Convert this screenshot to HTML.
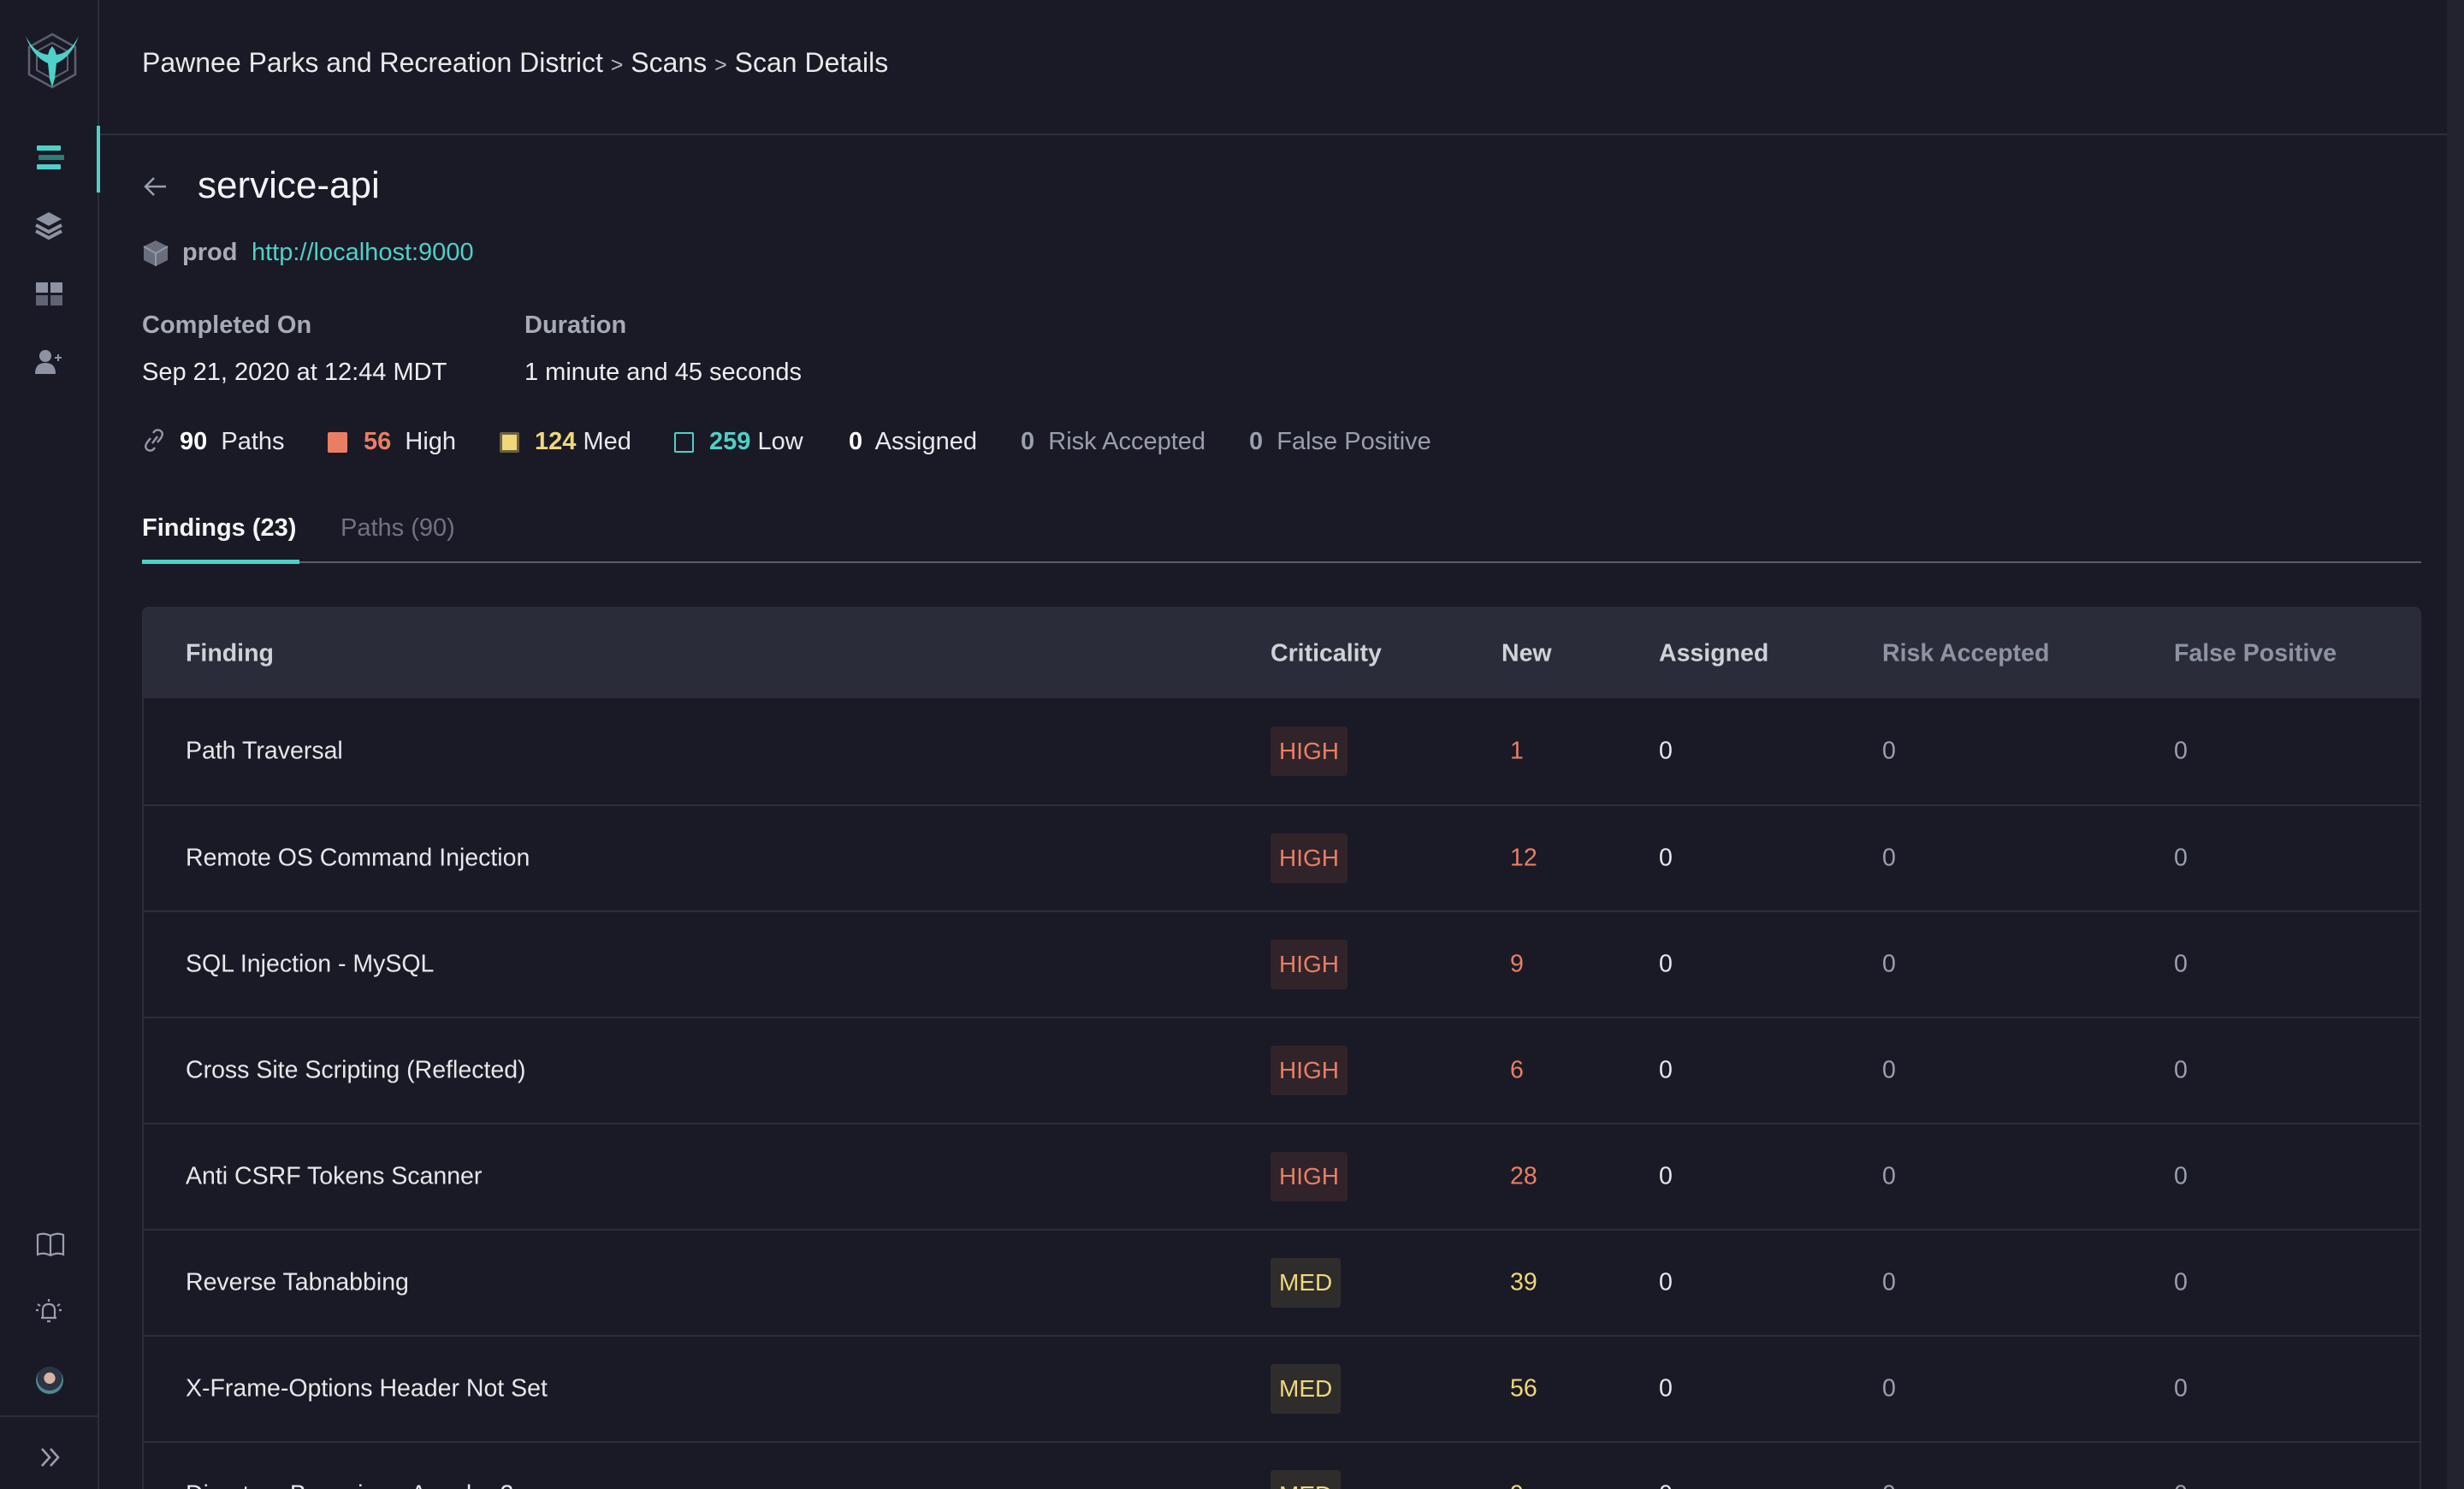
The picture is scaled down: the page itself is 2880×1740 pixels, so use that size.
<!DOCTYPE html>
<html><head><meta charset="utf-8"><style>
*{margin:0;padding:0;box-sizing:border-box}
html,body{width:2880px;height:1740px;overflow:hidden}
body{background:#1a1a26;font-family:"Liberation Sans",sans-serif;color:#e6e7ea;position:relative}
.side{position:absolute;left:0;top:0;width:116px;height:1740px;border-right:2px solid #2c2e3a;background:#1a1a26}
.abs{position:absolute}
.hdr{position:absolute;left:117px;top:0;right:20px;height:158px;border-bottom:2px solid #2e3039}
.scroll{position:absolute;right:0;top:0;width:20px;height:1740px;background:#22232e}
.t{position:absolute;white-space:nowrap}
.table{position:absolute;left:166px;top:709px;width:2664px;height:1060px;border:2px solid #2b2e3a;border-radius:8px;overflow:hidden}
.th{height:105px;background:#2a2d39;position:relative}
.row{height:124px;border-top:2px solid #2b2e3a;position:relative}
.c{position:absolute;top:50%;transform:translateY(-50%);font-size:28.5px;white-space:nowrap}
.th .c{font-weight:bold;color:#d0d2d8}
.badge{position:absolute;top:50%;transform:translateY(-50%);left:1317px;height:58px;border-radius:4px;padding:0 10px;font-size:28px;line-height:58px}
.hi{background:#30242a;color:#ea7e64}
.me{background:#2f2d2c;color:#f0d77a}
</style></head><body>
<div class="side">
  <svg class="abs" style="left:28px;top:36px" width="66" height="72" viewBox="0 0 66 72">
    <polygon points="33,4 60,19 60,51 33,66 6,51 6,19" fill="none" stroke="#5d6070" stroke-width="2.5"/>
    <polygon points="33,14 51,24 51,46 33,56 15,46 15,24" fill="none" stroke="#5d6070" stroke-width="2"/>
    <path d="M2,6 Q10,30 28,38 L30,56 L33,66 L36,56 L38,38 Q56,30 64,6 Q54,26 38,28 L36,22 L33,18 L30,22 L28,28 Q12,26 2,6Z" fill="#4fd0c8"/>
  </svg>
  <div class="abs" style="left:113px;top:147px;width:4px;height:78px;background:#4fd0c8"></div>
  <div class="abs" style="left:43px;top:170px;width:28px;height:6px;background:#4fd0c8;border-radius:1px"></div>
  <div class="abs" style="left:45px;top:181px;width:30px;height:6px;background:#2f7c78;border-radius:1px"></div>
  <div class="abs" style="left:43px;top:192px;width:28px;height:6px;background:#4fd0c8;border-radius:1px"></div>
  <svg class="abs" style="left:40px;top:246px" width="34" height="34" viewBox="0 0 34 34"><path d="M17,2 L32,10 L17,18 L2,10Z" fill="#8e93a3"/><path d="M2,17 L17,25 L32,17" stroke="#8e93a3" stroke-width="4" fill="none"/><path d="M2,24 L17,32 L32,24" stroke="#8e93a3" stroke-width="4" fill="none"/></svg>
  <div class="abs" style="left:42px;top:330px;width:14px;height:12px;background:#8e93a3"></div>
  <div class="abs" style="left:59px;top:330px;width:14px;height:12px;background:#8e93a3"></div>
  <div class="abs" style="left:42px;top:345px;width:14px;height:12px;background:#5f6372"></div>
  <div class="abs" style="left:59px;top:345px;width:14px;height:12px;background:#5f6372"></div>
  <svg class="abs" style="left:40px;top:408px" width="34" height="30" viewBox="0 0 34 30"><circle cx="13" cy="8" r="7" fill="#8e93a3"/><path d="M1,29 Q1,16 13,16 Q25,16 25,29Z" fill="#8e93a3"/><path d="M28,6v8M24,10h8" stroke="#8e93a3" stroke-width="2"/></svg>
  <svg class="abs" style="left:42px;top:1440px" width="34" height="30" viewBox="0 0 34 30"><path d="M2,3 Q9,0 17,4 Q25,0 32,3 L32,26 Q25,23 17,27 Q9,23 2,26Z M17,4 V27" fill="none" stroke="#9a9fae" stroke-width="2.2"/></svg>
  <svg class="abs" style="left:40px;top:1516px" width="34" height="34" viewBox="0 0 34 34"><path d="M10,24 V15 Q10,8 17,8 Q24,8 24,15 V24 H8 H26 M15,28 H19 M4,8 L7,10 M30,8 L27,10 M2,15 H5 M29,15 H32 M17,2 V5" fill="none" stroke="#9a9fae" stroke-width="2.2"/></svg>
  <div class="abs" style="left:42px;top:1597px;width:32px;height:32px;border-radius:50%;background:radial-gradient(circle at 50% 42%,#d8b4a0 0 26%,#2c3446 28% 58%,#4d8a8f 60%)"></div>
  <div class="abs" style="left:0;top:1654px;width:116px;height:2px;background:#2c2e3a"></div>
  <svg class="abs" style="left:46px;top:1690px" width="26" height="26" viewBox="0 0 26 26"><path d="M3,3 L12,13 L3,23 M13,3 L22,13 L13,23" fill="none" stroke="#9a9fae" stroke-width="2.6"/></svg>
</div>
<div class="scroll"></div>
<div class="hdr"></div>
<div class="t" style="left:166px;top:55px;font-size:32px;color:#e8e9ec">Pawnee Parks and Recreation District <span style="font-size:25px;color:#b6b9c2">&gt;</span> Scans <span style="font-size:25px;color:#b6b9c2">&gt;</span> Scan Details</div>
<svg class="abs" style="left:166px;top:204px" width="32" height="28" viewBox="0 0 32 28"><path d="M28,14 H4 M14,4 L4,14 L14,24" fill="none" stroke="#9a9fae" stroke-width="2.5"/></svg>
<div class="t" style="left:231px;top:192px;font-size:44px;color:#f2f3f5">service-api</div>
<svg class="abs" style="left:166px;top:279px" width="32" height="34" viewBox="0 0 32 34"><path d="M16,2 L30,9 V25 L16,32 L2,25 V9Z" fill="#6a6e7c"/><path d="M16,17 L30,9 M16,17 V32 M16,17 L2,9" stroke="#9398a6" stroke-width="2" fill="none"/></svg>
<div class="t" style="left:213px;top:279px;font-size:29px;font-weight:bold;color:#a7abb6">prod</div>
<div class="t" style="left:294px;top:279px;font-size:29px;color:#4fd0c8">http://localhost:9000</div>
<div class="t" style="left:166px;top:364px;font-size:29px;font-weight:bold;color:#a7abb6">Completed On</div>
<div class="t" style="left:613px;top:364px;font-size:29px;font-weight:bold;color:#a7abb6">Duration</div>
<div class="t" style="left:166px;top:419px;font-size:29px;color:#eceef1">Sep 21, 2020 at 12:44 MDT</div>
<div class="t" style="left:613px;top:419px;font-size:29px;color:#eceef1">1 minute and 45 seconds</div>
<svg class="abs" style="left:166px;top:500px" width="28" height="30" viewBox="0 0 28 30"><path d="M12,18 L18,10 M10,12 L6,17 Q2,23 7,26 Q12,28 15,23 M18,17 L22,12 Q26,6 21,3 Q16,1 13,6" fill="none" stroke="#9398a6" stroke-width="2.4"/></svg>
<div class="t" style="left:210px;top:500px;font-size:29px;color:#e8e9ec"><b style="color:#fff">90</b>&nbsp; Paths</div>
<div class="abs" style="left:383px;top:505px;width:23px;height:24px;background:#ea7e64;border-radius:2px"></div>
<div class="t" style="left:425px;top:500px;font-size:29px;color:#e8e9ec"><b style="color:#ea7e64">56</b>&nbsp; High</div>
<div class="abs" style="left:584px;top:505px;width:23px;height:24px;background:#f0d77a;border:3px solid #6b6240;border-radius:2px"></div>
<div class="t" style="left:625px;top:500px;font-size:29px;color:#e8e9ec"><b style="color:#f0d77a">124</b> Med</div>
<div class="abs" style="left:788px;top:505px;width:23px;height:24px;border:2.5px solid #4fd0c8;border-radius:2px"></div>
<div class="t" style="left:829px;top:500px;font-size:29px;color:#e8e9ec"><b style="color:#4fd0c8">259</b> Low</div>
<div class="t" style="left:992px;top:500px;font-size:29px;color:#e8e9ec"><b style="color:#fff">0</b>&nbsp; Assigned</div>
<div class="t" style="left:1193px;top:500px;font-size:29px;color:#9a9fae"><b>0</b>&nbsp; Risk Accepted</div>
<div class="t" style="left:1460px;top:500px;font-size:29px;color:#9a9fae"><b>0</b>&nbsp; False Positive</div>
<div class="t" style="left:166px;top:601px;font-size:29px;font-weight:bold;color:#f4f5f7">Findings (23)</div>
<div class="t" style="left:398px;top:601px;font-size:29px;color:#6f7381">Paths (90)</div>
<div class="abs" style="left:166px;top:656px;width:2664px;height:2px;background:#5b5e6b"></div>
<div class="abs" style="left:166px;top:654px;width:184px;height:5px;background:#4fd0c8"></div>
<div class="table">
 <div class="th">
  <div class="c" style="left:49px">Finding</div><div class="c" style="left:1317px">Criticality</div><div class="c" style="left:1587px">New</div><div class="c" style="left:1771px">Assigned</div><div class="c" style="left:2032px;color:#8e93a3">Risk Accepted</div><div class="c" style="left:2373px;color:#8e93a3">False Positive</div>
 </div>
 <div class="row" style="border-top:none"><div class="c" style="left:49px">Path Traversal</div><div class="badge hi">HIGH</div><div class="c" style="left:1597px;color:#ea7e64">1</div><div class="c" style="left:1771px">0</div><div class="c" style="left:2032px;color:#9a9fae">0</div><div class="c" style="left:2373px;color:#9a9fae">0</div></div>
 <div class="row"><div class="c" style="left:49px">Remote OS Command Injection</div><div class="badge hi">HIGH</div><div class="c" style="left:1597px;color:#ea7e64">12</div><div class="c" style="left:1771px">0</div><div class="c" style="left:2032px;color:#9a9fae">0</div><div class="c" style="left:2373px;color:#9a9fae">0</div></div>
 <div class="row"><div class="c" style="left:49px">SQL Injection - MySQL</div><div class="badge hi">HIGH</div><div class="c" style="left:1597px;color:#ea7e64">9</div><div class="c" style="left:1771px">0</div><div class="c" style="left:2032px;color:#9a9fae">0</div><div class="c" style="left:2373px;color:#9a9fae">0</div></div>
 <div class="row"><div class="c" style="left:49px">Cross Site Scripting (Reflected)</div><div class="badge hi">HIGH</div><div class="c" style="left:1597px;color:#ea7e64">6</div><div class="c" style="left:1771px">0</div><div class="c" style="left:2032px;color:#9a9fae">0</div><div class="c" style="left:2373px;color:#9a9fae">0</div></div>
 <div class="row"><div class="c" style="left:49px">Anti CSRF Tokens Scanner</div><div class="badge hi">HIGH</div><div class="c" style="left:1597px;color:#ea7e64">28</div><div class="c" style="left:1771px">0</div><div class="c" style="left:2032px;color:#9a9fae">0</div><div class="c" style="left:2373px;color:#9a9fae">0</div></div>
 <div class="row"><div class="c" style="left:49px">Reverse Tabnabbing</div><div class="badge me">MED</div><div class="c" style="left:1597px;color:#f0d77a">39</div><div class="c" style="left:1771px">0</div><div class="c" style="left:2032px;color:#9a9fae">0</div><div class="c" style="left:2373px;color:#9a9fae">0</div></div>
 <div class="row"><div class="c" style="left:49px">X-Frame-Options Header Not Set</div><div class="badge me">MED</div><div class="c" style="left:1597px;color:#f0d77a">56</div><div class="c" style="left:1771px">0</div><div class="c" style="left:2032px;color:#9a9fae">0</div><div class="c" style="left:2373px;color:#9a9fae">0</div></div>
 <div class="row"><div class="c" style="left:49px">Directory Browsing - Apache 2</div><div class="badge me">MED</div><div class="c" style="left:1597px;color:#f0d77a">9</div><div class="c" style="left:1771px">0</div><div class="c" style="left:2032px;color:#9a9fae">0</div><div class="c" style="left:2373px;color:#9a9fae">0</div></div>
</div>
</body></html>
